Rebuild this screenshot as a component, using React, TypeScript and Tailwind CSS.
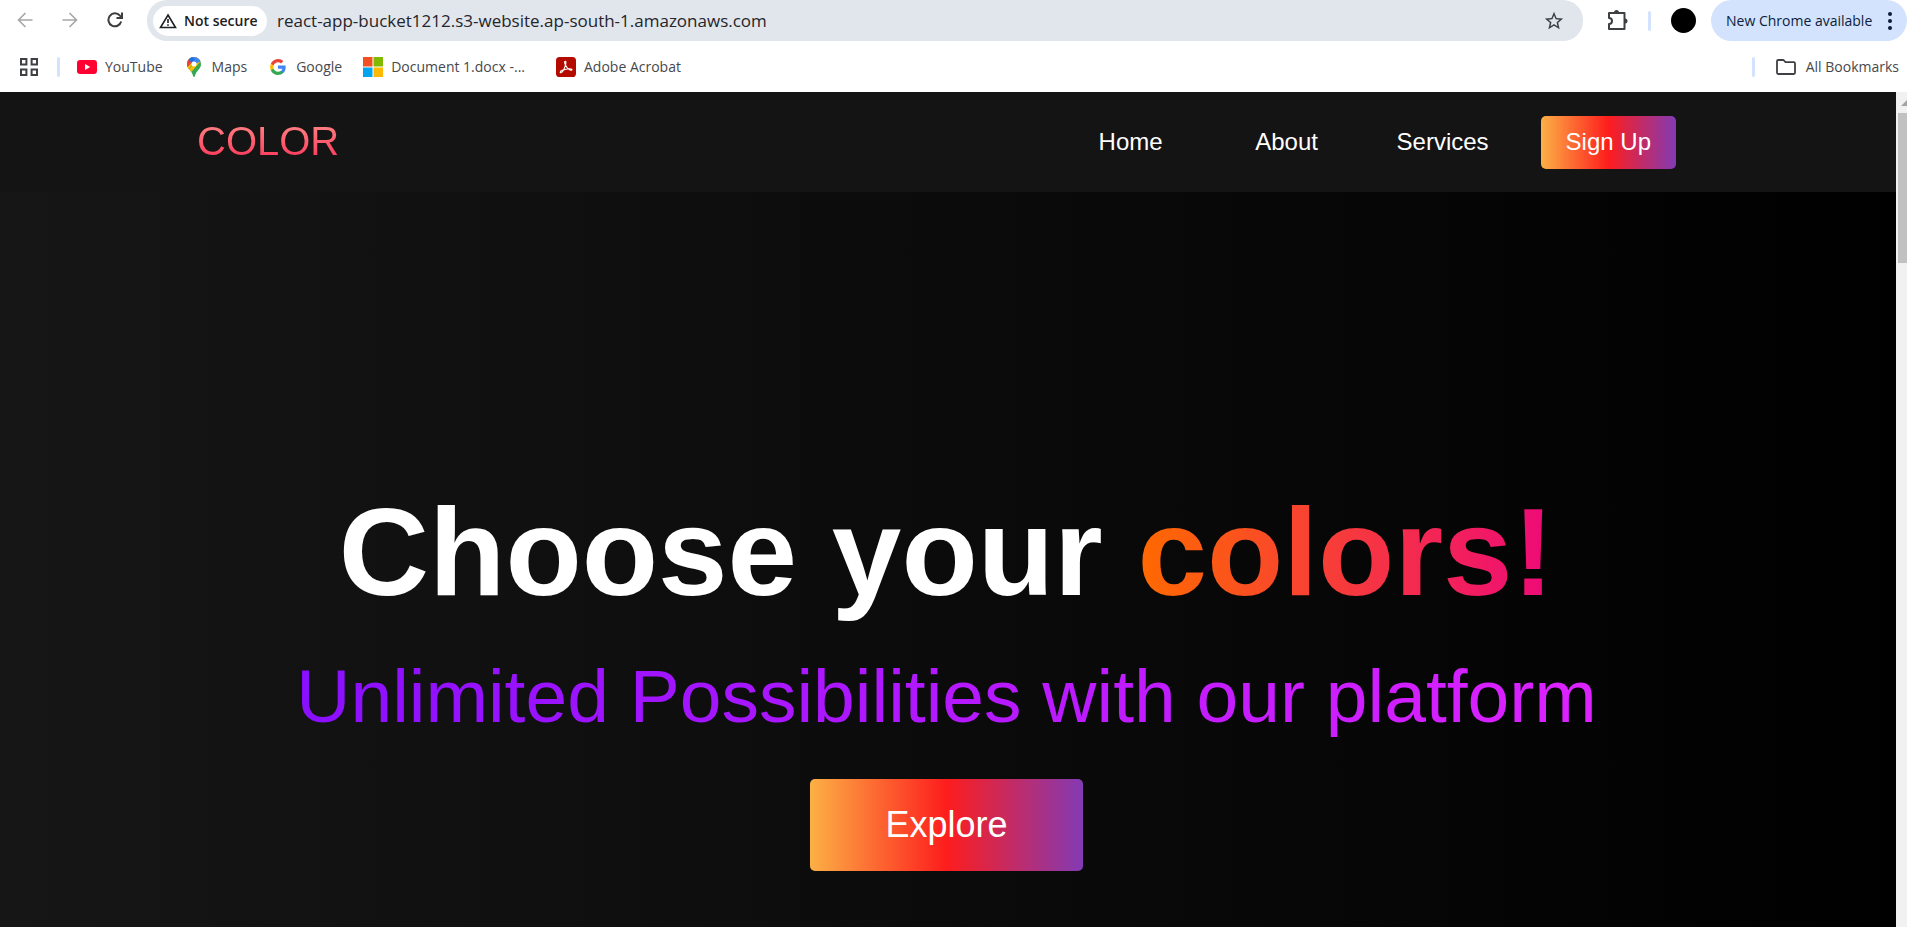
import React from "react";

function BackIcon() {
  return (
    <svg width="16" height="16" viewBox="0 0 16 16" fill="none" stroke="#a6a7a9" strokeWidth="1.6" aria-hidden="true">
      <path d="M15.5 8H1.5M8.5 1L1.5 8l7 7" />
    </svg>
  );
}

function ForwardIcon() {
  return (
    <svg width="16" height="16" viewBox="0 0 16 16" fill="none" stroke="#a6a7a9" strokeWidth="1.6" aria-hidden="true">
      <path d="M0.5 8h14M7.5 1l7 7-7 7" />
    </svg>
  );
}

function ReloadIcon() {
  return (
    <svg width="16" height="16" viewBox="0 0 16 16" fill="none" stroke="#3c3d3f" strokeWidth="2" aria-hidden="true">
      <path d="M14.2 9.6A6.5 6.5 0 1 1 12.9 3.6L14.6 5.3" />
      <path d="M15 0.5V6H9.5" />
    </svg>
  );
}

function WarningIcon() {
  return (
    <svg width="18" height="16" viewBox="0 0 18 16" fill="none" stroke="#1f2023" aria-hidden="true">
      <path d="M9 2L16.5 14.5h-15z" strokeWidth="1.6" />
      <path d="M9 6v4M9 11.2v1.6" strokeWidth="1.6" />
    </svg>
  );
}

function StarIcon() {
  return (
    <svg width="22" height="22" viewBox="0 0 24 24" fill="#3c4043" aria-hidden="true">
      <path d="M22 9.24l-7.19-.62L12 2 9.19 8.63 2 9.24l5.46 4.73L5.82 21 12 17.27 18.18 21l-1.63-7.03L22 9.24zM12 15.4l-3.76 2.27 1-4.28-3.32-2.88 4.38-.38L12 6.1l1.71 4.04 4.38.38-3.32 2.88 1 4.28L12 15.4z" />
    </svg>
  );
}

function PuzzleIcon() {
  return (
    <svg width="21" height="21" viewBox="0 0 21 21" aria-hidden="true">
      <path
        d="M2 3h15.500v16H2v-5a3 3 0 0 0 0-6z"
        fill="none"
        stroke="#3c4043"
        strokeWidth="2"
        strokeLinejoin="round"
      />
      <path d="M7 2.500a2.500 2.500 0 0 1 5 0zM18 8.500a2.500 2.500 0 0 1 0 5z" fill="#3c4043" />
    </svg>
  );
}

function AppsIcon() {
  return (
    <svg width="18" height="18" viewBox="0 0 18 18" fill="none" stroke="#3f4043" strokeWidth="2" aria-hidden="true">
      <path d="M1 1h5.4v5.4H1zM11.6 1H17v5.4h-5.4zM1 11.6h5.4V17H1zM11.6 11.6H17V17h-5.4z" />
    </svg>
  );
}

function YouTubeIcon() {
  return (
    <svg width="20" height="14" viewBox="0 0 20 14" aria-hidden="true">
      <rect width="20" height="14" rx="3.2" fill="#ff0033" />
      <path d="M8 4l5.2 3L8 10z" fill="#fff" />
    </svg>
  );
}

function MapsIcon() {
  return (
    <svg width="20" height="20" viewBox="-3 0 20 20" aria-hidden="true">
      <clipPath id="pin">
        <path d="M7 0a7 7 0 0 1 7 7c0 2-.7 3.600-1.900 5.100C10 14.700 8.600 16 7.900 18.900c-.2 1.300-1.600 1.300-1.800 0C5.400 16 4 14.700 1.900 12.100.7 10.600 0 9 0 7a7 7 0 0 1 7-7z" />
      </clipPath>
      <g clipPath="url(#pin)">
        <rect width="14" height="20" fill="#34a853" />
        <path d="M0 14L12 0H0z" fill="#fbbc04" />
        <path d="M-1 9.500L7 0H-1z" fill="#ea4335" />
        <path d="M0 14.500L14 -1.500V4L2.500 17z" fill="#fbbc04" />
        <path d="M3 0h11v4.500L7 7z" fill="#4285f4" />
        <path d="M1 3L4.500 6 8 2 3 -1z" fill="#1a73e8" />
        <path d="M-1 3h2.500L4.700 5.500 0 11z" fill="#ea4335" />
      </g>
      <circle cx="7" cy="7" r="2.500" fill="#fff" />
    </svg>
  );
}

function GoogleIcon() {
  return (
    <svg width="20" height="16" viewBox="-1.750 1 27.500 22" aria-hidden="true">
      <path d="M22.560 12.250c0-.78-.07-1.530-.2-2.250H12v4.260h5.920a5.060 5.060 0 0 1-2.200 3.320v2.770h3.570c2.080-1.920 3.270-4.740 3.270-8.100z" fill="#4285f4" />
      <path d="M12 23c2.970 0 5.460-.98 7.280-2.660l-3.570-2.770c-.98.660-2.230 1.060-3.710 1.060-2.860 0-5.290-1.930-6.160-4.530H2.180v2.840A11 11 0 0 0 12 23z" fill="#34a853" />
      <path d="M5.840 14.090a6.600 6.600 0 0 1 0-4.180V7.070H2.180a11 11 0 0 0 0 9.860z" fill="#fbbc05" />
      <path d="M12 5.380c1.620 0 3.060.56 4.210 1.640l3.150-3.150A11 11 0 0 0 2.180 7.070l3.660 2.840C6.710 7.310 9.140 5.380 12 5.380z" fill="#ea4335" />
    </svg>
  );
}

function MicrosoftIcon() {
  return (
    <svg width="20" height="20" viewBox="0 0 20 20" aria-hidden="true">
      <path d="M0 0h9.500v9.500H0z" fill="#f25022" />
      <path d="M10.500 0H20v9.500h-9.500z" fill="#7fba00" />
      <path d="M0 10.500h9.500V20H0z" fill="#00a4ef" />
      <path d="M10.500 10.500H20V20h-9.500z" fill="#ffb900" />
    </svg>
  );
}

function AcrobatIcon() {
  return (
    <svg width="20" height="20" viewBox="0 0 20 20" aria-hidden="true">
      <rect width="20" height="20" rx="3.600" fill="#b30b00" />
      <path
        d="M9.300 4.200c-1 0-.9 1.800.1 3.800 1 2.200 3 4.400 4.800 5.100 1.400.5 2.200-.2 1.500-.9-1.500-1-7.400-.1-10 1.400-1.700 1-1.800 2.300-.9 2.100 1.400-.4 3.600-4.200 4.600-7.400.6-2 .8-4.100-.1-4.100z"
        fill="none"
        stroke="#fff"
        strokeWidth="1.100"
      />
    </svg>
  );
}

function FolderIcon() {
  return (
    <svg width="22" height="16" viewBox="0 0 22 16" fill="none" stroke="#3f4043" strokeWidth="1.800" strokeLinejoin="round" aria-hidden="true">
      <path d="M1 2.200Q1 1 2.200 1H7.500L9.500 3.200H17.800Q19 3.200 19 4.400V13.800Q19 15 17.800 15H2.200Q1 15 1 13.800z" />
    </svg>
  );
}

function MenuDots() {
  return (
    <svg width="4" height="18" viewBox="0 0 4 18" fill="#0b1d3c" aria-hidden="true">
      <circle cx="2" cy="2" r="2" />
      <circle cx="2" cy="9" r="2" />
      <circle cx="2" cy="16" r="2" />
    </svg>
  );
}

function Toolbar() {
  return (
    <div className="flex h-[41px] items-center">
      <div className="flex w-[147px] shrink-0 items-center gap-[29px] pb-[2px] pl-[17px]">
        <button aria-label="Back"><BackIcon /></button>
        <button aria-label="Forward"><ForwardIcon /></button>
        <button aria-label="Reload"><ReloadIcon /></button>
      </div>
      <div className="flex h-full grow items-center rounded-[20px] bg-[#e1e5ec] pr-[18px] pl-[6px]">
        <button className="flex h-[30px] w-[114px] shrink-0 items-center gap-[7px] rounded-full bg-white pl-[6px] text-sm font-semibold whitespace-nowrap text-[#1f2023]">
          <WarningIcon />
          Not secure
        </button>
        <input
          aria-label="Address"
          readOnly
          value="react-app-bucket1212.s3-website.ap-south-1.amazonaws.com"
          className="ml-[10px] min-w-0 grow bg-transparent text-[17px] text-[#24262a] outline-none"
        />
        <button aria-label="Bookmark this page"><StarIcon /></button>
      </div>
      <div className="flex shrink-0 items-center pl-[24px]">
        <button aria-label="Extensions"><PuzzleIcon /></button>
        <span className="ml-[20px] h-5 w-[3px] rounded-full bg-[#d3e3fd]" />
        <button aria-label="Profile" className="ml-[20px] h-[25px] w-[25px] rounded-full bg-black" />
      </div>
      <button className="ml-[15px] flex h-full w-[196px] shrink-0 items-center justify-between rounded-full bg-[#d3e3fd] pr-[15px] pl-[15px] text-sm whitespace-nowrap text-[#0b1d3c]">
        New Chrome available
        <MenuDots />
      </button>
    </div>
  );
}

function Bookmark({ icon, label, className }: { icon: React.ReactNode; label: string; className: string }) {
  return (
    <a href="#" className={`flex items-center gap-2 whitespace-nowrap ${className}`}>
      {icon}
      {label}
    </a>
  );
}

function BookmarksBar() {
  return (
    <div className="flex h-[51px] items-center pl-[20px] pr-2 text-sm text-[#47484b]">
      <button aria-label="Apps"><AppsIcon /></button>
      <span className="ml-[19px] h-5 w-[3px] rounded-full bg-[#d3e3fd]" />
      <Bookmark icon={<YouTubeIcon />} label="YouTube" className="ml-[17px]" />
      <Bookmark icon={<MapsIcon />} label="Maps" className="ml-[21px]" />
      <Bookmark icon={<GoogleIcon />} label="Google" className="ml-[21px]" />
      <Bookmark icon={<MicrosoftIcon />} label="Document 1.docx -..." className="ml-[21px]" />
      <Bookmark icon={<AcrobatIcon />} label="Adobe Acrobat" className="ml-[31px]" />
      <span className="ml-auto h-5 w-[3px] rounded-full bg-[#d3e3fd]" />
      <Bookmark icon={<FolderIcon />} label="All Bookmarks" className="ml-[21px]" />
    </div>
  );
}

function SiteNav() {
  return (
    <nav className="flex h-[100px] items-center justify-between bg-[#141414] pr-[220px] pl-[197px] text-2xl text-white">
      <a href="#" className="bg-linear-to-t/srgb from-[#ff0844] to-[#ffb199] bg-clip-text pb-[2px] text-[40px] leading-[78px] text-transparent">
        COLOR
      </a>
      <div className="flex items-center">
        <a href="#home" className="w-[156px] text-center">Home</a>
        <a href="#about" className="w-[156px] text-center">About</a>
        <a href="#services" className="w-[156px] text-center">Services</a>
        <a href="#sign-up" className="ml-5 rounded-[5px] bg-linear-to-r/srgb from-[#fcb045] via-[#fd1d1d] to-[#833ab4] px-[25px] pt-[10px] pb-[11px] leading-8">
          Sign Up
        </a>
      </div>
    </nav>
  );
}

function Hero() {
  return (
    <section className="flex grow flex-col items-center bg-linear-to-r/srgb from-[#161616] to-black pt-[288px] pr-[3px] text-center">
      <h1 className="text-[125px] leading-[144px] font-bold text-white">
        Choose your{" "}
        <span className="bg-linear-to-r/srgb from-[#ff6a00] to-[#ee0979] bg-clip-text text-transparent">colors!</span>
      </h1>
      <p className="mt-[29px] bg-linear-to-r/srgb from-[#8a0fff] to-[#dd22ff] bg-clip-text text-[75px] leading-[87px] text-transparent">
        Unlimited Possibilities with our platform
      </p>
      <button className="mt-[39px] rounded-[5px] bg-linear-to-r/srgb from-[#fcb045] via-[#fd1d1d] to-[#833ab4] px-[75px] py-[25px] text-[36px] leading-[42px] text-white">
        Explore
      </button>
    </section>
  );
}

function Scrollbar() {
  return (
    <div className="w-[11px] shrink-0 overflow-hidden bg-[#f1f1f1] pl-[2px]">
      <svg width="17" height="21" viewBox="0 0 17 21" className="max-w-none" aria-hidden="true">
        <path d="M3 14l6-6 6 6z" fill="#a3a3a3" />
      </svg>
      <div className="h-[150px] bg-[#c1c1c1]" />
    </div>
  );
}

export default function App() {
  return (
    <div className="flex min-h-screen flex-col bg-white">
      <header className="font-['Open_Sans','Noto_Sans',sans-serif]">
        <Toolbar />
        <BookmarksBar />
      </header>
      <div className="flex grow font-['Liberation_Sans',Arial,sans-serif]">
        <main className="flex min-w-0 grow flex-col">
          <SiteNav />
          <Hero />
        </main>
        <Scrollbar />
      </div>
    </div>
  );
}
